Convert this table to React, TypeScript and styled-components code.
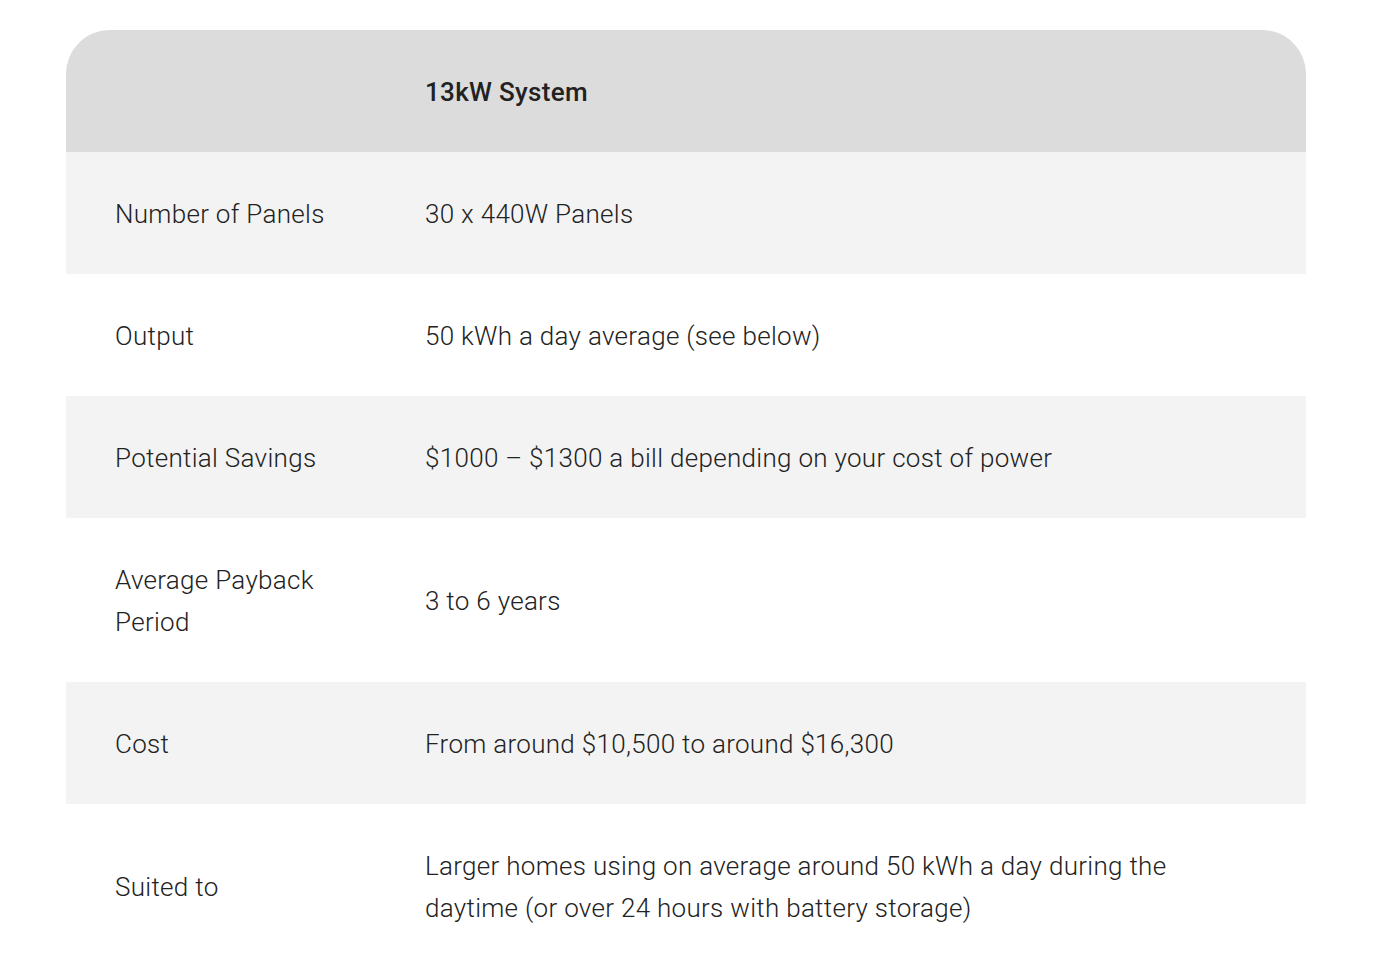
import React from "react";
import styled, { createGlobalStyle } from "styled-components";

const Global = createGlobalStyle`
  html, body { margin: 0; padding: 0; background: #fff; }
  body { font-family: Roboto, "Open Sans", sans-serif; color: #222; }
`;

const Page = styled.div`
  padding: 30px 0 0 66px;
`;

const Table = styled.table`
  width: 1240px;
  border-collapse: separate;
  border-spacing: 0;
  font-size: 26px;
  line-height: 42px;
  letter-spacing: 0.3px;
  font-weight: 300;
  color: #222;
`;

const HeadCell = styled.th`
  background: #dcdcdc;
  height: 122px;
  box-sizing: border-box;
  padding: 2px 49px 0;
  text-align: left;
  font-weight: 500;
  font-size: 26px;
  color: #222;
  vertical-align: middle;
  &:first-child { border-top-left-radius: 44px; width: 261px; }
  &:last-child { border-top-right-radius: 44px; padding-left: 0; }
`;

const Row = styled.tr<{ $shaded: boolean }>`
  background: ${(p) => (p.$shaded ? "#f3f3f3" : "#ffffff")};
`;

const LabelCell = styled.td`
  padding: 41px 49px 39px;
  vertical-align: middle;
  width: 261px;
`;

const ValueCell = styled.td`
  padding: 41px 49px 39px 0;
  vertical-align: middle;
`;

const rows: [string, string][] = [
  ["Number of Panels", "30 x 440W Panels"],
  ["Output", "50 kWh a day average (see below)"],
  ["Potential Savings", "$1000 – $1300 a bill depending on your cost of power"],
  ["Average Payback Period", "3 to 6 years"],
  ["Cost", "From around $10,500 to around $16,300"],
  [
    "Suited to",
    "Larger homes using on average around 50 kWh a day during the daytime (or over 24 hours with battery storage)",
  ],
];

export default function App() {
  return (
    <>
      <Global />
      <Page>
        <Table>
          <thead>
            <tr>
              <HeadCell></HeadCell>
              <HeadCell>13kW System</HeadCell>
            </tr>
          </thead>
          <tbody>
            {rows.map(([label, value], i) => (
              <Row key={label} $shaded={i % 2 === 0}>
                <LabelCell>{label}</LabelCell>
                <ValueCell>{value}</ValueCell>
              </Row>
            ))}
          </tbody>
        </Table>
      </Page>
    </>
  );
}
